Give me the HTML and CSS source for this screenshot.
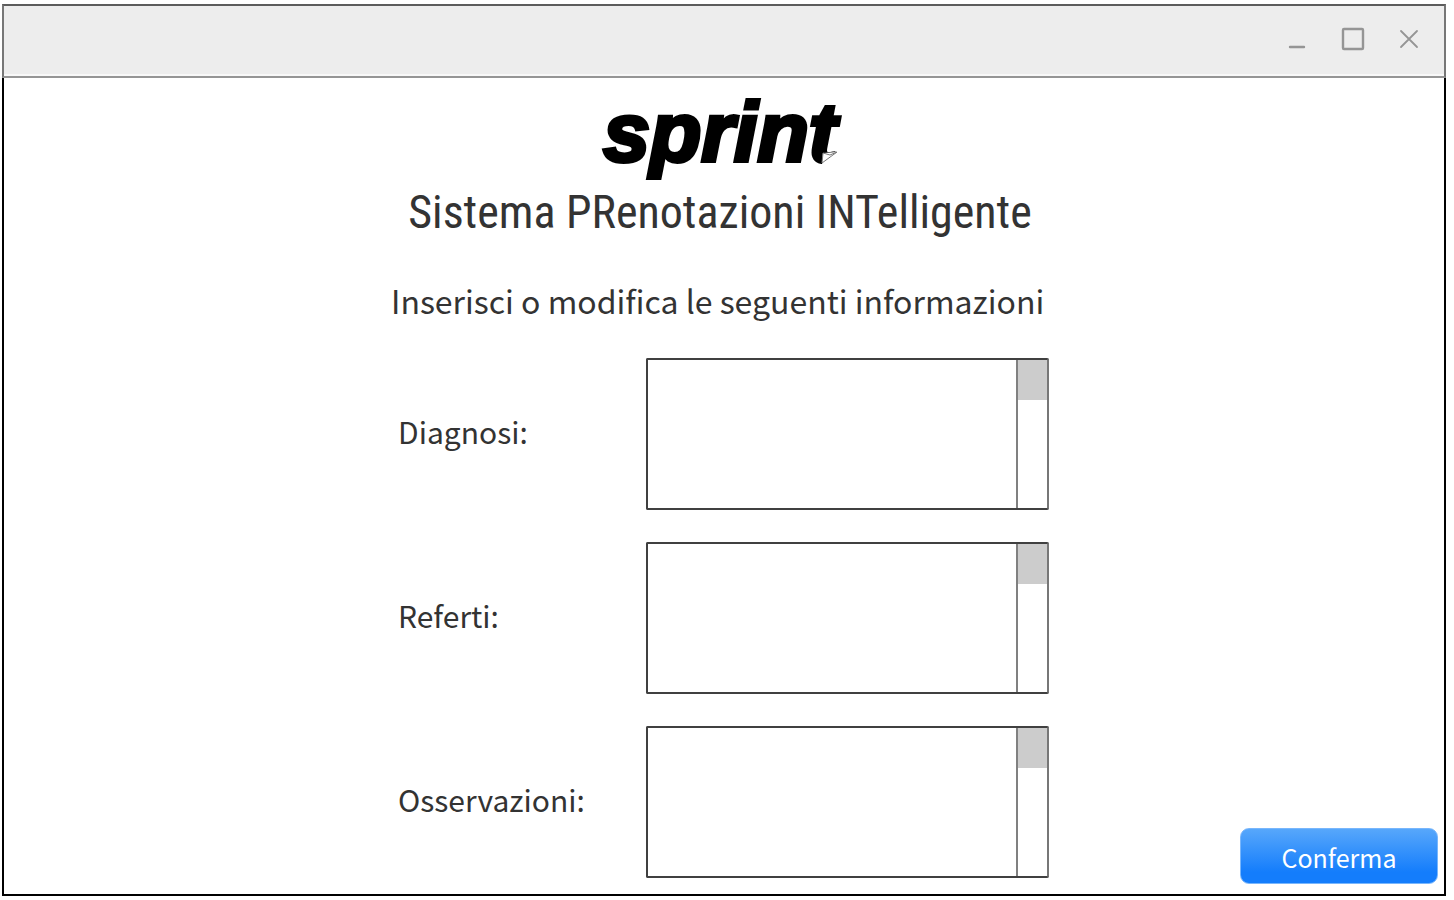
FILE: index.html
```html
<!DOCTYPE html>
<html lang="it">
<head>
<meta charset="utf-8">
<meta name="viewport" content="width=device-width, initial-scale=1">
<title>Sprint</title>
<link rel="stylesheet" href="styles.css">
</head>
<body>
<div class="window">
  <header class="titlebar">
    <button class="control" type="button" aria-label="Riduci">
      <svg viewBox="0 0 24 24"><path d="M5 20H19" stroke-width="2.4" stroke-linecap="round"/></svg>
    </button>
    <button class="control" type="button" aria-label="Ingrandisci">
      <svg viewBox="0 0 24 24"><rect x="2" y="2" width="20" height="20" rx="1" stroke-width="2.4"/></svg>
    </button>
    <button class="control" type="button" aria-label="Chiudi">
      <svg viewBox="0 0 24 24"><path d="M4 4L20 20M20 4L4 20" stroke-width="1.8" stroke-linecap="round"/></svg>
    </button>
  </header>
  <main class="content">
    <div class="logo">
      <span class="wordmark">sprint</span>
      <svg class="curl" viewBox="0 0 20 14"><path d="M4 2L18 1L20 14L3 14Z" fill="#fff"/><path d="M4 2L11 4L18 1L3 12Z" fill="#fff" stroke="#777" stroke-width="1"/></svg>
    </div>
    <h1 class="title">Sistema PRenotazioni INTelligente</h1>
    <form class="form">
      <p class="intro">Inserisci o modifica le seguenti informazioni</p>
      <div class="row">
        <label class="label" for="diagnosi">Diagnosi:</label>
        <div class="field"><textarea class="text" id="diagnosi"></textarea><span class="track"><span class="thumb"></span></span></div>
      </div>
      <div class="row">
        <label class="label" for="referti">Referti:</label>
        <div class="field"><textarea class="text" id="referti"></textarea><span class="track"><span class="thumb"></span></span></div>
      </div>
      <div class="row">
        <label class="label" for="osservazioni">Osservazioni:</label>
        <div class="field"><textarea class="text" id="osservazioni"></textarea><span class="track"><span class="thumb"></span></span></div>
      </div>
      <button class="confirm" type="submit">Conferma</button>
    </form>
  </main>
</div>
</body>
</html>
```
FILE: styles.css
```css
* { box-sizing: border-box; }

body {
  margin: 0;
  padding: 4px 8px 4px 2px;
  background: #fff;
  color: #333;
  font-family: "Noto Sans CJK SC", "Noto Sans", sans-serif;
}

.window {
  position: relative;
  min-height: calc(100vh - 8px);
  border: 2px solid #000;
  border-top: 0;
}

.titlebar {
  display: flex;
  justify-content: flex-end;
  align-items: center;
  gap: 32px;
  height: 74px;
  margin: 0 -2px;
  padding: 0 23px;
  background: #ededed;
  border: 2px solid #777;
  border-top-color: #5c5c5c;
  border-bottom-color: #959595;
  box-shadow: inset 0 -2px #f8f8f8;
}

.control {
  width: 24px;
  height: 24px;
  margin-bottom: 4px;
  padding: 0;
  border: 0;
  background: none;
}

.control svg {
  display: block;
  fill: none;
  stroke: #959595;
}

.content {
  display: flex;
  flex-direction: column;
  align-items: center;
  padding: 12px 8px 14px 0;
}

.logo {
  position: relative;
  color: #000;
  font: italic 700 84px/84px "Liberation Sans", Arial, sans-serif;
  -webkit-text-stroke: 4px #000;
}

.curl {
  position: absolute;
  right: -2px;
  bottom: 9px;
  width: 20px;
}

.title {
  margin: 0;
  padding-top: 8px;
  font: 400 46px/60px "Roboto Condensed", "Noto Sans CJK SC", sans-serif;
}

.form {
  display: flex;
  flex-direction: column;
  gap: 32px;
  width: 658px;
  max-width: 100%;
  padding-top: 34px;
}

.intro {
  margin: 0;
  padding-bottom: 2px;
  font-size: 32px;
  line-height: 48px;
}

.row {
  display: flex;
  justify-content: space-between;
  align-items: center;
  padding-left: 7px;
}

.label {
  padding-bottom: 6px;
  font-size: 30px;
  line-height: 40px;
}

.field {
  display: flex;
  width: 403px;
  height: 152px;
  border: 2px solid #404040;
  border-right-color: #777;
  border-radius: 2px;
}

.text {
  flex: 1;
  min-width: 0;
  padding: 8px;
  border: 0;
  background: #fff;
  color: inherit;
  font: inherit;
  font-size: 24px;
  resize: none;
  overflow: hidden;
}

.track {
  width: 31px;
  border-left: 2px solid #808080;
}

.thumb {
  display: block;
  height: 40px;
  background: #ccc;
}

.confirm {
  position: absolute;
  right: 6px;
  bottom: 10px;
  width: 198px;
  height: 56px;
  padding: 2px 0 0;
  border: 1px solid #78b6fc;
  border-radius: 9px;
  background: linear-gradient(#57a7fb, #147dfc 80%);
  color: #fff;
  font: inherit;
  font-size: 25px;
  line-height: 40px;
}
```
